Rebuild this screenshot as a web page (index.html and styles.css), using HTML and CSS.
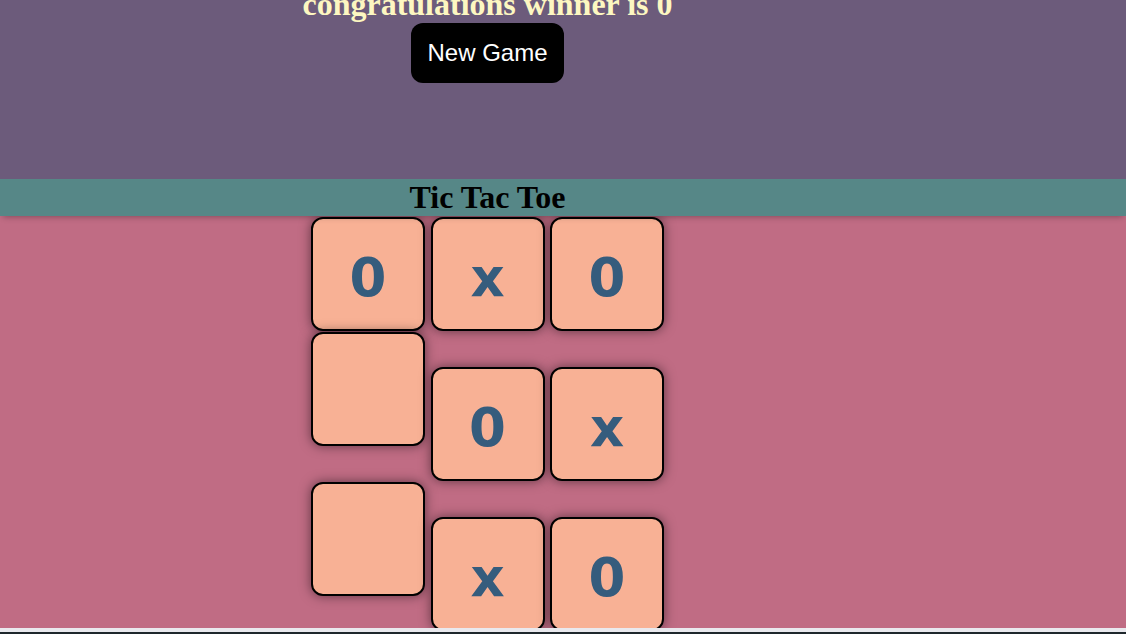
FILE: index.html
```html
<!DOCTYPE html>
<html lang="en">
<head>
<meta charset="utf-8">
<title>Tic Tac Toe</title>
<link rel="stylesheet" href="styles.css">
</head>
<body>
<div class="page">
  <section class="status">
    <div class="column">
      <h1 class="winner">congratulations winner is 0</h1>
      <button class="new-game">New Game</button>
    </div>
  </section>
  <header class="title-bar">
    <div class="column">
      <h1 class="title">Tic Tac Toe</h1>
    </div>
  </header>
  <main class="game">
    <div class="column">
      <div class="board">
        <div class="row">
          <div class="cell">0</div>
          <div class="cell">x</div>
          <div class="cell">0</div>
        </div>
        <div class="row">
          <div class="cell"></div>
          <div class="cell">0</div>
          <div class="cell">x</div>
        </div>
        <div class="row">
          <div class="cell"></div>
          <div class="cell">x</div>
          <div class="cell">0</div>
        </div>
      </div>
    </div>
  </main>
</div>
<div class="frame-edge"></div>
</body>
</html>
```
FILE: styles.css
```css
html, body {
  margin: 0;
  padding: 0;
}
body {
  width: 1126px;
  height: 634px;
  overflow: hidden;
  display: flex;
  flex-direction: column;
  font-family: "Liberation Serif", "Times New Roman", serif;
}
.page {
  height: 628px;
  overflow: hidden;
  display: flex;
  flex-direction: column;
  background: #c06c84;
}
.column {
  width: 975px;
  display: flex;
  flex-direction: column;
  align-items: center;
}
.status {
  height: 179px;
  background: #6c5b7b;
  flex: none;
}
.winner {
  margin: -14px 0 0;
  font-size: 32px;
  font-weight: bold;
  color: #fdf7c1;
  line-height: normal;
}
.new-game {
  font-family: "Liberation Sans", Arial, sans-serif;
  font-size: 24px;
  line-height: normal;
  color: #ffffff;
  background: #000000;
  border: none;
  border-radius: 12px;
  padding: 16px 16px;
}
.title-bar {
  flex: none;
  height: 37px;
  background: #568787;
  box-shadow: 0 4px 6px -3px rgba(0, 0, 0, 0.3);
  position: relative;
  z-index: 1;
}
.title {
  margin: 0;
  font-size: 32px;
  font-weight: bold;
  color: #000000;
  line-height: normal;
}
.game {
  flex: 1;
  overflow: hidden;
}
.board {
  margin-top: 0.5px;
  display: flex;
  flex-direction: column;
  gap: 1.5px;
}
.row {
  display: flex;
  align-items: baseline;
  gap: 5.5px;
}
.cell {
  box-sizing: border-box;
  width: 114px;
  height: 114px;
  padding-top: 32.5px;
  background: #f8b195;
  border: 2px solid #000000;
  border-radius: 12px;
  box-shadow: 0 0 12px rgba(0, 0, 0, 0.5);
  text-align: center;
  font-family: "DejaVu Sans", Verdana, sans-serif;
  font-weight: bold;
  font-size: 53px;
  line-height: 1;
  color: #355c7d;
}
.frame-edge {
  flex: none;
  height: 6px;
  background: linear-gradient(#e9e9ee 0, #e9e9ee 4px, #1e272c 4px);
}
```
